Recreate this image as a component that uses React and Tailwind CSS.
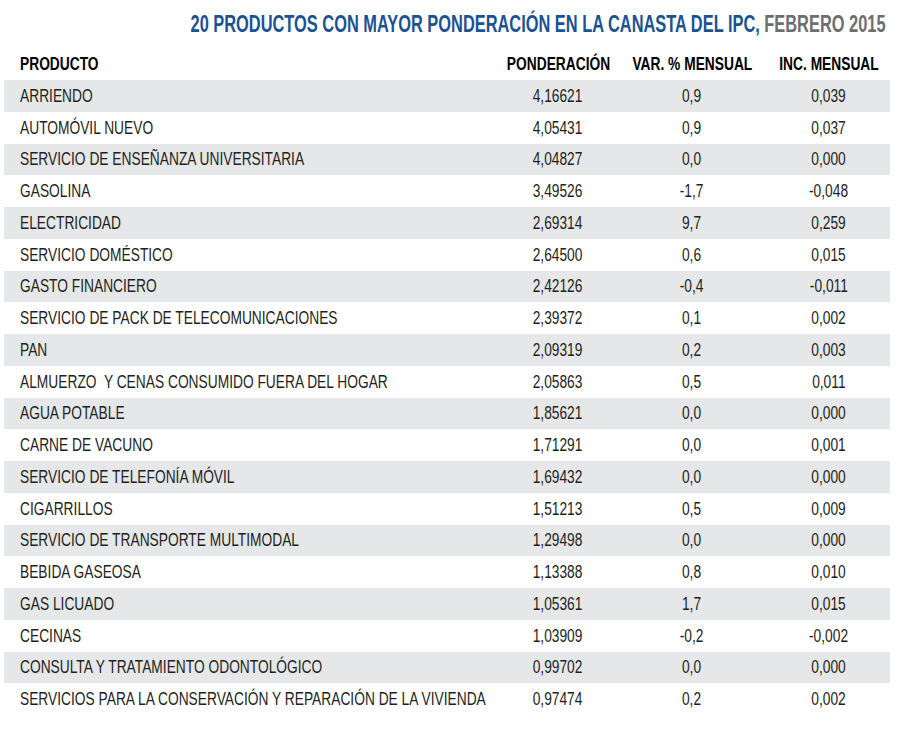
const rows = [
  ["ARRIENDO", "4,16621", "0,9", "0,039"],
  ["AUTOMÓVIL NUEVO", "4,05431", "0,9", "0,037"],
  ["SERVICIO DE ENSEÑANZA UNIVERSITARIA", "4,04827", "0,0", "0,000"],
  ["GASOLINA", "3,49526", "-1,7", "-0,048"],
  ["ELECTRICIDAD", "2,69314", "9,7", "0,259"],
  ["SERVICIO DOMÉSTICO", "2,64500", "0,6", "0,015"],
  ["GASTO FINANCIERO", "2,42126", "-0,4", "-0,011"],
  ["SERVICIO DE PACK DE TELECOMUNICACIONES", "2,39372", "0,1", "0,002"],
  ["PAN", "2,09319", "0,2", "0,003"],
  ["ALMUERZO  Y CENAS CONSUMIDO FUERA DEL HOGAR", "2,05863", "0,5", "0,011"],
  ["AGUA POTABLE", "1,85621", "0,0", "0,000"],
  ["CARNE DE VACUNO", "1,71291", "0,0", "0,001"],
  ["SERVICIO DE TELEFONÍA MÓVIL", "1,69432", "0,0", "0,000"],
  ["CIGARRILLOS", "1,51213", "0,5", "0,009"],
  ["SERVICIO DE TRANSPORTE MULTIMODAL", "1,29498", "0,0", "0,000"],
  ["BEBIDA GASEOSA", "1,13388", "0,8", "0,010"],
  ["GAS LICUADO", "1,05361", "1,7", "0,015"],
  ["CECINAS", "1,03909", "-0,2", "-0,002"],
  ["CONSULTA Y TRATAMIENTO ODONTOLÓGICO", "0,99702", "0,0", "0,000"],
  ["SERVICIOS PARA LA CONSERVACIÓN Y REPARACIÓN DE LA VIVIENDA", "0,97474", "0,2", "0,002"],
];

const font = { fontFamily: '"Liberation Sans", Arial, sans-serif' };

// condensed look: Liberation Sans squeezed horizontally
function Cell({ children, left }) {
  return (
    <div className={left ? "flex pl-4 whitespace-pre" : "flex justify-center whitespace-pre"}>
      <span className={`inline-block shrink-0 scale-x-[0.765] ${left ? "origin-left" : "origin-center"}`}>{children}</span>
    </div>
  );
}

export default function App() {
  return (
    <div className="w-[900px] h-[750px] bg-white text-[#231f20] overflow-hidden" style={font}>
      <div className="h-[46px] flex items-center justify-end pr-[15px] pt-[2px] whitespace-nowrap">
        <h1 className="inline-block origin-right scale-x-[0.683] text-[24px] leading-none font-bold text-[#1b5291]">
          20 PRODUCTOS CON MAYOR PONDERACIÓN EN LA CANASTA DEL IPC, <span className="text-[#6d6e71]">FEBRERO 2015</span>
        </h1>
      </div>

      <div className="ml-[4px] w-[886px]">
        <div className="grid grid-cols-[496px_116px_152px_122px] h-[34px] pt-[1px] items-center text-[18px] leading-none font-bold text-black">
          <Cell left>PRODUCTO</Cell>
          <Cell>PONDERACIÓN</Cell>
          <Cell>VAR. % MENSUAL</Cell>
          <Cell>INC. MENSUAL</Cell>
        </div>

        {rows.map((r, i) => (
          <div
            key={i}
            className={`grid grid-cols-[496px_116px_152px_122px] h-[31.75px] items-center text-[18px] leading-none ${i % 2 === 0 ? "bg-[#e6e7e8]" : ""}`}
          >
            <Cell left>{r[0]}</Cell>
            <Cell>{r[1]}</Cell>
            <Cell>{r[2]}</Cell>
            <Cell>{r[3]}</Cell>
          </div>
        ))}
      </div>
    </div>
  );
}
